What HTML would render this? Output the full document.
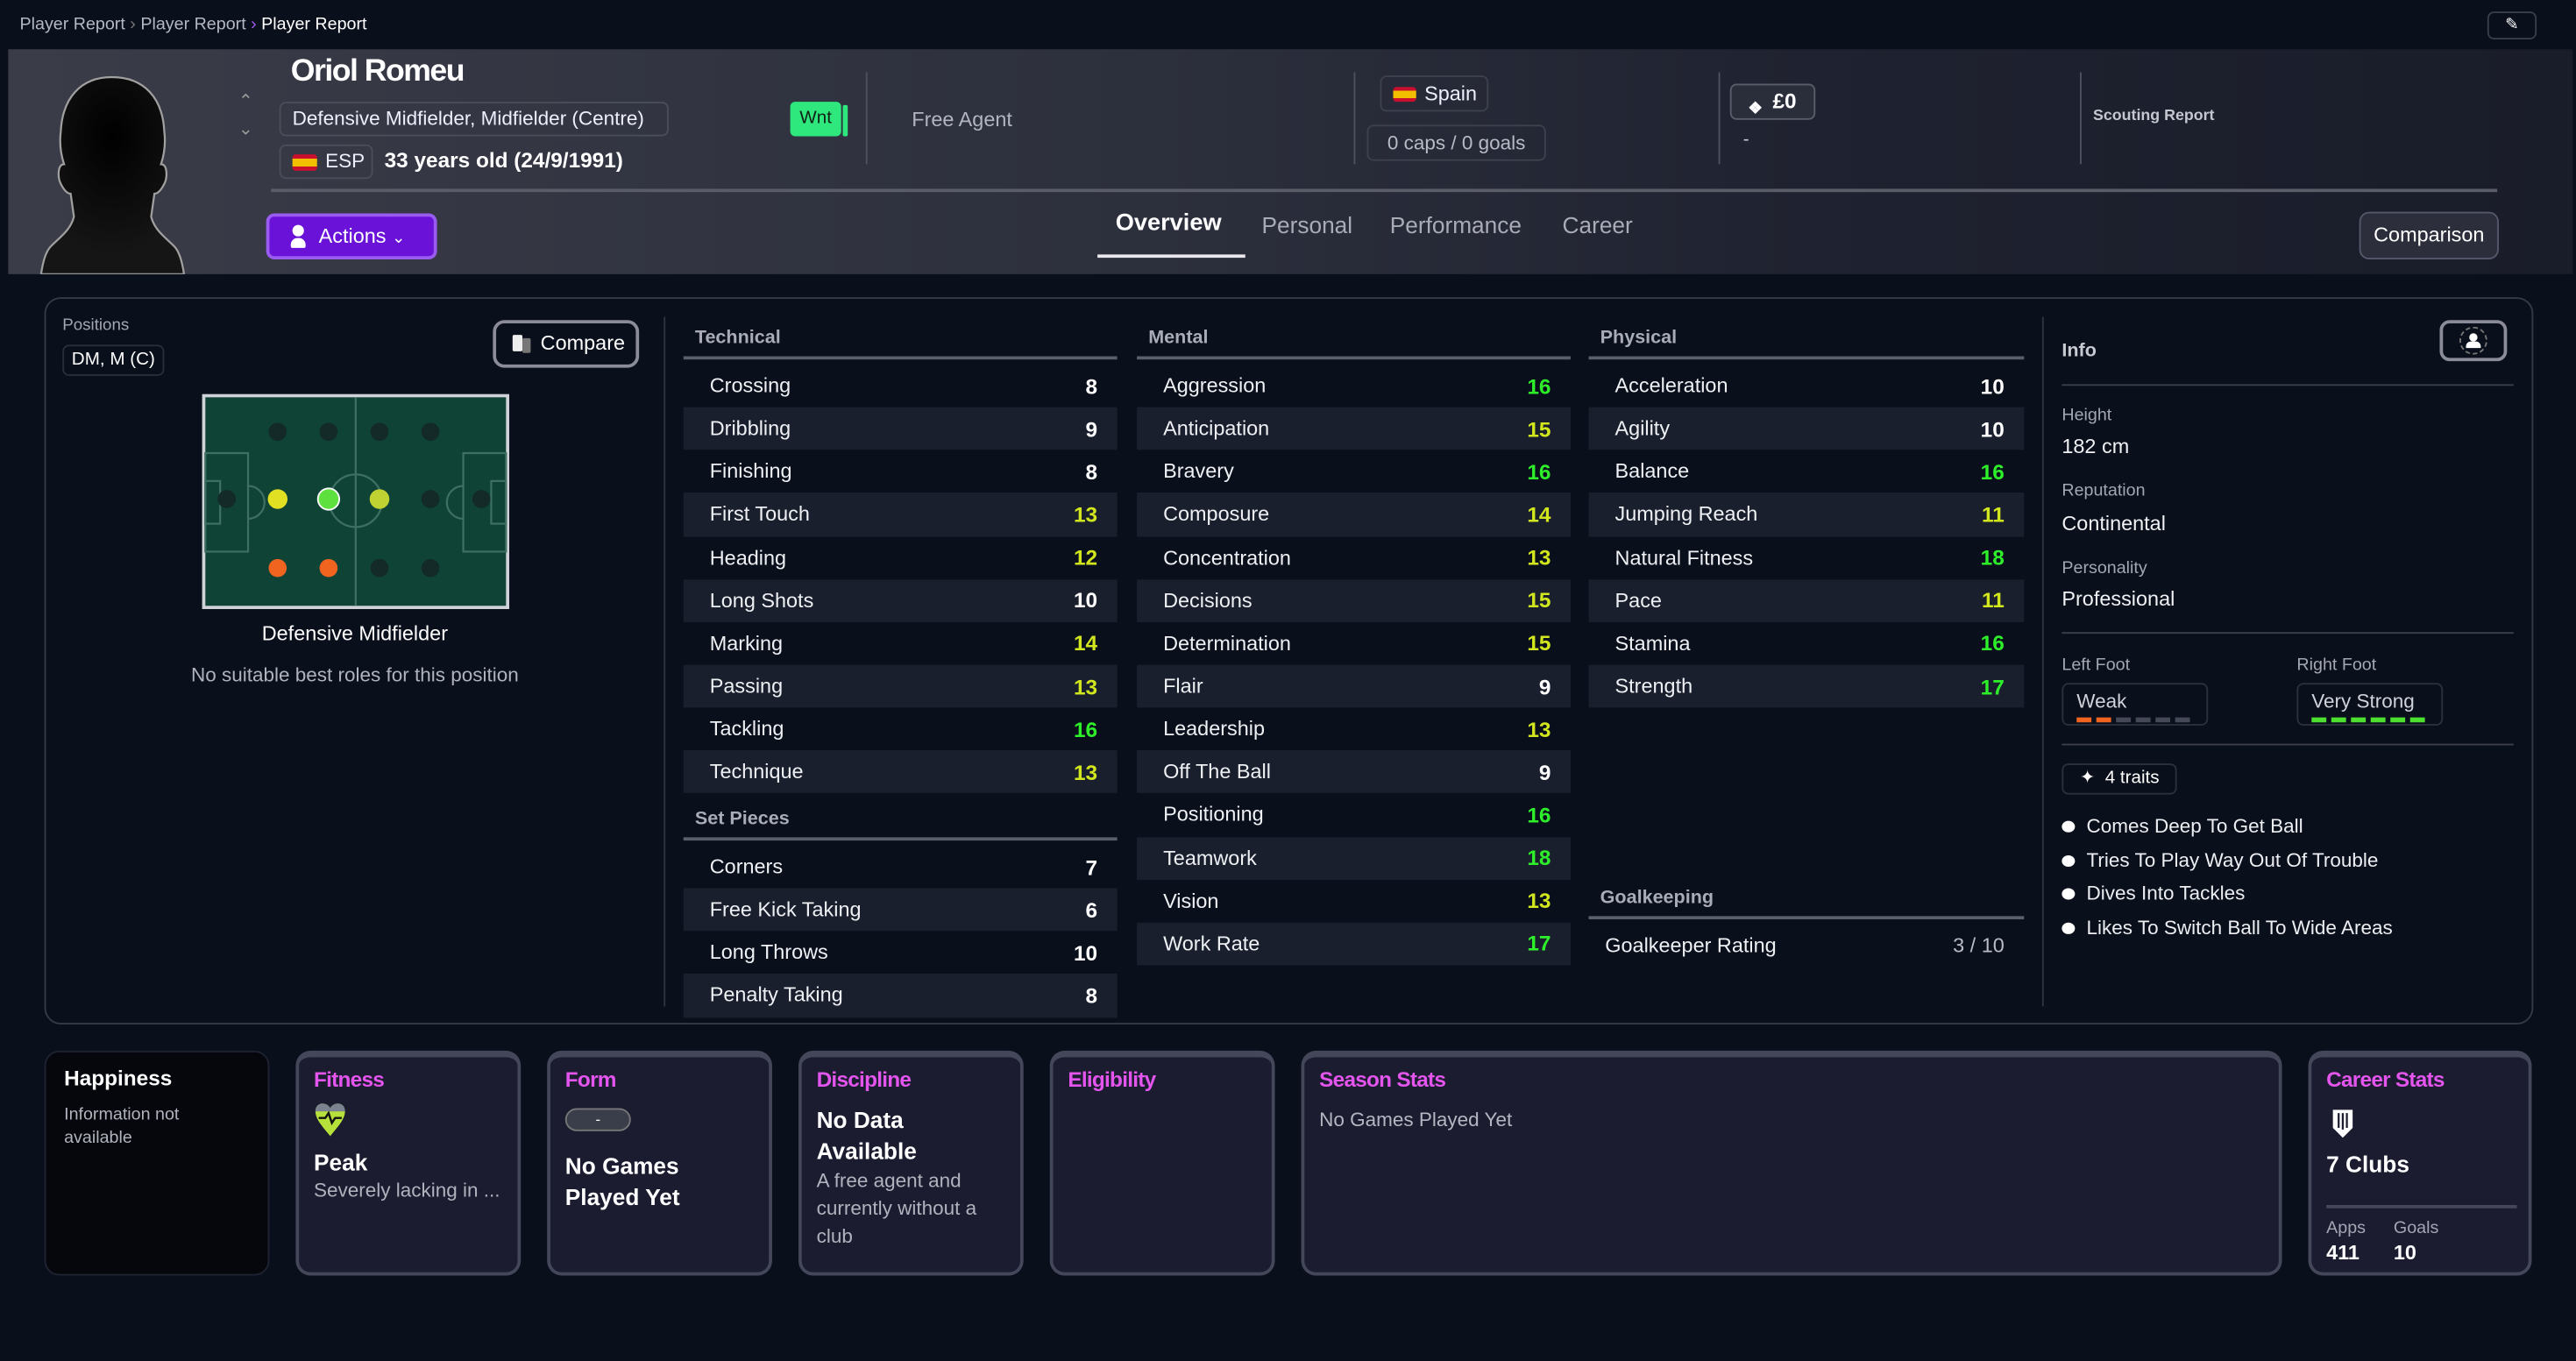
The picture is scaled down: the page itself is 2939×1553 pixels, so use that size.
<!DOCTYPE html>
<html><head><meta charset="utf-8"><style>
*{box-sizing:border-box;margin:0;padding:0}
html,body{width:2939px;height:1553px;overflow:hidden;background:#0a0f1c}
#s{position:absolute;left:0;top:0;width:1568px;height:829px;transform:scale(1.8744,1.8733);transform-origin:0 0;background:#0a0f1c;font-family:"Liberation Sans",sans-serif;color:#e8e9ee}
.a{position:absolute;white-space:nowrap}
.pill{position:absolute;border:1px solid #4a4d5a;border-radius:4px}
.col{position:absolute}
.hd{font-size:11.5px;font-weight:bold;color:#a9acb8;height:18px;padding-left:7px;line-height:14px}
.ln{height:2px;background:#5b5e6b;margin-bottom:3px}
.r{height:26.15px;display:flex;justify-content:space-between;align-items:center;padding:0 12px 0 16px;font-size:12.5px;color:#eef0f4}
.r:nth-child(even){background:#1a1f2d}
.r b{font-size:13px}
.w{color:#fff}.y{color:#d2e61e}.g{color:#2ef02a}
.card{position:absolute;top:640px;height:137px;background:#1b1c30;border:2px solid #44465a;border-top-width:4px;border-radius:9px;padding:6px 9px}
.ct{color:#e455ee;font-weight:bold;font-size:13px;letter-spacing:-.4px}
.lbl{font-size:10.5px;color:#a3a7b3}
.val{font-size:12.5px;color:#f0f1f4}
</style></head><body><div id="s">
<div class="a" style="left:12px;top:9px;font-size:10.5px;color:#b4b8c4">Player Report <span style="color:#777">&#8250;</span> Player Report <span style="color:#a05af0">&#8250;</span> <span style="color:#fff">Player Report</span></div>
<div class="pill" style="left:1514px;top:7px;width:30px;height:17px;border-color:#3a3d4a;font-size:10px;text-align:center;line-height:15px;color:#fff">&#9998;</div>
<div class="a" style="left:5px;top:30px;width:1561px;height:137px;background:linear-gradient(90deg,#3a3c48 0%,#2c2f3c 45%,#1f2230 70%,#191c29 100%)"></div>
<svg class="a" style="left:22px;top:44px" width="92" height="123" viewBox="0 0 92 123"><defs><radialGradient id="hg" cx="50%" cy="30%" r="60%"><stop offset="0" stop-color="#000"/><stop offset="1" stop-color="#151515"/></radialGradient></defs><path d="M46 3C27 3 16 16 15 36c-1 8 0 14 2 20-4 0-4 8-2 12 2 4 4 6 6 6l2 14c-2 8-8 12-14 18-3 3-5 10-6 17h87c-1-7-3-14-6-17-6-6-12-10-14-18l2-14c2 0 4-2 6-6 2-4 2-12-2-12 2-6 3-12 2-20C77 16 66 3 46 3z" fill="url(#hg)" stroke="#a0a0a0" stroke-width="1.2"/></svg>
<div class="a" style="left:145px;top:55px;font-size:11px;color:#999">&#8963;</div>
<div class="a" style="left:145px;top:72px;font-size:11px;color:#999">&#8964;</div>
<div class="a" style="left:177px;top:33px;font-size:19px;font-weight:bold;color:#fff;letter-spacing:-.8px">Oriol Romeu</div>
<div class="pill" style="left:170px;top:62px;width:237px;height:21px;font-size:12px;line-height:19px;padding-left:7px;color:#eef">Defensive Midfielder, Midfielder (Centre)</div>
<div class="pill" style="left:170px;top:88px;width:57px;height:21px;font-size:12px;line-height:19px;padding-left:27px;color:#eef"><span style="position:absolute;left:7px;top:5px;width:15px;height:10px;background:linear-gradient(#c8102e 25%,#f1bf00 25%,#f1bf00 75%,#c8102e 75%);border-radius:2px"></span>ESP</div>
<div class="a" style="left:234px;top:90px;font-size:13px;font-weight:bold;color:#fff">33 years old (24/9/1991)</div>
<div class="a" style="left:481px;top:62px;width:31px;height:21px;background:#2ee87e;border-radius:3px;font-size:11px;line-height:21px;text-align:center;color:#102015">Wnt</div>
<div class="a" style="left:513px;top:64px;width:3px;height:19px;background:#2ee87e;border-radius:1px"></div>
<div class="a" style="left:527px;top:44px;width:1px;height:56px;background:#4e515e"></div>
<div class="a" style="left:555px;top:66px;font-size:12.5px;color:#b2b5c0">Free Agent</div>
<div class="a" style="left:824px;top:44px;width:1px;height:56px;background:#4e515e"></div>
<div class="pill" style="left:840px;top:46px;width:66px;height:22px;font-size:12.5px;line-height:20px;padding-left:26px;color:#eef;border-color:#3d404d"><span style="position:absolute;left:7px;top:6px;width:14px;height:9px;background:linear-gradient(#c8102e 25%,#f1bf00 25%,#f1bf00 75%,#c8102e 75%);border-radius:2px"></span>Spain</div>
<div class="pill" style="left:832px;top:76px;width:109px;height:22px;font-size:12px;line-height:20px;text-align:center;color:#b8bbc6;border-color:#3d404d">0 caps / 0 goals</div>
<div class="a" style="left:1046px;top:44px;width:1px;height:56px;background:#4e515e"></div>
<div class="pill" style="left:1053px;top:51px;width:52px;height:22px;font-size:13px;font-weight:bold;line-height:20px;padding-left:25px;color:#fff;background:#2a2d3a;border-color:#5a5d6a"><span style="position:absolute;left:10px;top:5px;font-size:10px">&#10070;</span>£0</div>
<div class="a" style="left:1061px;top:79px;font-size:11px;color:#ccc">-</div>
<div class="a" style="left:1266px;top:44px;width:1px;height:56px;background:#4e515e"></div>
<div class="a" style="left:1274px;top:65px;font-size:9.5px;font-weight:bold;color:#c4c7d0">Scouting Report</div>
<div class="a" style="left:165px;top:115px;width:1355px;height:2px;background:#5a5c68"></div>
<div class="a" style="left:162px;top:130px;width:104px;height:28px;background:#6a12d8;border:2px solid #9a5cf0;border-radius:5px;font-size:12.5px;line-height:24px;padding-left:30px;color:#fff"><span style="position:absolute;left:14px;top:5px;width:7px;height:7px;border-radius:50%;background:#fff"></span><span style="position:absolute;left:13px;top:13px;width:9px;height:6px;border-radius:4px 4px 1px 1px;background:#fff"></span>Actions <span style="font-size:10px">&#8964;</span></div>
<div class="a" style="left:679px;top:128px;font-size:14.5px;font-weight:bold;color:#fff">Overview</div>
<div class="a" style="left:668px;top:155px;width:90px;height:2px;background:#e8e8ee"></div>
<div class="a" style="left:768px;top:129px;font-size:14px;color:#a9acb7">Personal</div>
<div class="a" style="left:846px;top:129px;font-size:14px;color:#a9acb7">Performance</div>
<div class="a" style="left:951px;top:129px;font-size:14px;color:#a9acb7">Career</div>
<div class="a" style="left:1436px;top:129px;width:85px;height:29px;background:#2c2f3b;border:1px solid #55586a;border-radius:6px;font-size:12.5px;line-height:27px;text-align:center;color:#fff">Comparison</div>

<div class="a" style="left:27px;top:181px;width:1515px;height:443px;border:1px solid #363a48;border-radius:10px"></div>
<div class="a lbl" style="left:38px;top:193px;font-size:10px">Positions</div>
<div class="pill" style="left:38px;top:210px;width:62px;height:19px;font-size:11px;line-height:17px;text-align:center;color:#fff;border-color:#2a2e3c">DM, M (C)</div>
<div class="a" style="left:300px;top:195px;width:89px;height:29px;border:2px solid #8a8d99;border-radius:7px;font-size:12.5px;line-height:25px;padding-left:27px;color:#fff"><span style="position:absolute;left:10px;top:7px;width:6px;height:10px;background:#eee;border-radius:1px"></span><span style="position:absolute;left:16px;top:9px;width:5px;height:9px;background:#777;border-radius:1px"></span>Compare</div>
<svg class="a" style="left:123px;top:240px" width="187" height="131" viewBox="0 0 187 131">
<rect x="1" y="1" width="185" height="129" fill="#0e4336" stroke="#cfd2d6" stroke-width="2"/>
<g fill="none" stroke="#3f6f62" stroke-width="1.2"><line x1="93.5" y1="2" x2="93.5" y2="129"/><circle cx="93.5" cy="65" r="16"/><rect x="2" y="36" width="26" height="60"/><rect x="2" y="53" width="9" height="26"/><rect x="159" y="36" width="26" height="60"/><rect x="176" y="53" width="9" height="26"/><path d="M28 56a10 10 0 0 1 0 20M159 56a10 10 0 0 0 0 20"/></g>
<g fill="#132a28"><circle cx="46" cy="23" r="5.5"/><circle cx="77" cy="23" r="5.5"/><circle cx="108" cy="23" r="5.5"/><circle cx="139" cy="23" r="5.5"/><circle cx="15" cy="64" r="5.5"/><circle cx="139" cy="64" r="5.5"/><circle cx="170" cy="64" r="5.5"/><circle cx="108" cy="106" r="5.5"/><circle cx="139" cy="106" r="5.5"/></g>
<circle cx="46" cy="64" r="6" fill="#e2e022"/><circle cx="77" cy="64" r="6.5" fill="#5ee03e" stroke="#fff" stroke-width="1"/><circle cx="108" cy="64" r="6" fill="#c0d232"/>
<circle cx="46" cy="106" r="5.5" fill="#f06420"/><circle cx="77" cy="106" r="5.5" fill="#f06420"/>
</svg>
<div class="a" style="left:0;width:432px;text-align:center;top:379px;font-size:12.5px;color:#fff">Defensive Midfielder</div>
<div class="a" style="left:0;width:432px;text-align:center;top:404px;font-size:12px;color:#b0b3bd">No suitable best roles for this position</div>
<div class="a" style="left:404px;top:193px;width:1px;height:420px;background:#30343f"></div>

<div class="col" style="left:416px;top:199px;width:264px">
<div class="hd">Technical</div><div class="ln"></div>
<div><div class="r"><span>Crossing</span><b class="w">8</b></div><div class="r"><span>Dribbling</span><b class="w">9</b></div><div class="r"><span>Finishing</span><b class="w">8</b></div><div class="r"><span>First Touch</span><b class="y">13</b></div><div class="r"><span>Heading</span><b class="y">12</b></div><div class="r"><span>Long Shots</span><b class="w">10</b></div><div class="r"><span>Marking</span><b class="y">14</b></div><div class="r"><span>Passing</span><b class="y">13</b></div><div class="r"><span>Tackling</span><b class="g">16</b></div><div class="r"><span>Technique</span><b class="y">13</b></div></div>
</div>
<div class="col" style="left:416px;top:492px;width:264px">
<div class="hd">Set Pieces</div><div class="ln"></div>
<div><div class="r"><span>Corners</span><b class="w">7</b></div><div class="r"><span>Free Kick Taking</span><b class="w">6</b></div><div class="r"><span>Long Throws</span><b class="w">10</b></div><div class="r"><span>Penalty Taking</span><b class="w">8</b></div></div>
</div>
<div class="col" style="left:692px;top:199px;width:264px">
<div class="hd">Mental</div><div class="ln"></div>
<div><div class="r"><span>Aggression</span><b class="g">16</b></div><div class="r"><span>Anticipation</span><b class="y">15</b></div><div class="r"><span>Bravery</span><b class="g">16</b></div><div class="r"><span>Composure</span><b class="y">14</b></div><div class="r"><span>Concentration</span><b class="y">13</b></div><div class="r"><span>Decisions</span><b class="y">15</b></div><div class="r"><span>Determination</span><b class="y">15</b></div><div class="r"><span>Flair</span><b class="w">9</b></div><div class="r"><span>Leadership</span><b class="y">13</b></div><div class="r"><span>Off The Ball</span><b class="w">9</b></div><div class="r"><span>Positioning</span><b class="g">16</b></div><div class="r"><span>Teamwork</span><b class="g">18</b></div><div class="r"><span>Vision</span><b class="y">13</b></div><div class="r"><span>Work Rate</span><b class="g">17</b></div></div>
</div>
<div class="col" style="left:967px;top:199px;width:265px">
<div class="hd">Physical</div><div class="ln"></div>
<div><div class="r"><span>Acceleration</span><b class="w">10</b></div><div class="r"><span>Agility</span><b class="w">10</b></div><div class="r"><span>Balance</span><b class="g">16</b></div><div class="r"><span>Jumping Reach</span><b class="y">11</b></div><div class="r"><span>Natural Fitness</span><b class="g">18</b></div><div class="r"><span>Pace</span><b class="y">11</b></div><div class="r"><span>Stamina</span><b class="g">16</b></div><div class="r"><span>Strength</span><b class="g">17</b></div></div>
</div>
<div class="col" style="left:967px;top:540px;width:265px">
<div class="hd">Goalkeeping</div><div class="ln"></div>
<div class="r" style="background:none;padding-left:10px"><span>Goalkeeper Rating</span><span style="color:#b8bbc6">3 / 10</span></div>
</div>
<div class="a" style="left:1243px;top:193px;width:1px;height:420px;background:#30343f"></div>

<div class="a" style="left:1255px;top:208px;font-size:11.5px;font-weight:bold;color:#c8cad2">Info</div>
<div class="a" style="left:1485px;top:195px;width:41px;height:25px;border:2px solid #8a8d99;border-radius:6px"><span style="position:absolute;left:10px;top:2px;width:17px;height:17px;border:1.5px dashed #777;border-radius:50%"></span><span style="position:absolute;left:16px;top:6px;width:5px;height:5px;background:#fff;border-radius:50%"></span><span style="position:absolute;left:14px;top:11px;width:9px;height:4px;background:#fff;border-radius:3px 3px 0 0"></span></div>
<div class="a" style="left:1255px;top:234px;width:275px;height:1px;background:#3c3f4b"></div>
<div class="a lbl" style="left:1255px;top:247px">Height</div><div class="a val" style="left:1255px;top:265px">182 cm</div>
<div class="a lbl" style="left:1255px;top:293px">Reputation</div><div class="a val" style="left:1255px;top:312px">Continental</div>
<div class="a lbl" style="left:1255px;top:340px">Personality</div><div class="a val" style="left:1255px;top:358px">Professional</div>
<div class="a" style="left:1255px;top:385px;width:275px;height:1px;background:#3c3f4b"></div>
<div class="a lbl" style="left:1255px;top:399px">Left Foot</div><div class="a lbl" style="left:1398px;top:399px">Right Foot</div>
<div class="pill" style="left:1255px;top:416px;width:89px;height:26px;border-color:#2c303d;font-size:12px;color:#d0d2da;padding:3px 0 0 8px">Weak
<div style="display:flex;gap:3px;margin-top:3px"><i style="width:9px;height:3px;background:#f06420"></i><i style="width:9px;height:3px;background:#f06420"></i><i style="width:9px;height:3px;background:#454957"></i><i style="width:9px;height:3px;background:#454957"></i><i style="width:9px;height:3px;background:#454957"></i><i style="width:9px;height:3px;background:#454957"></i></div></div>
<div class="pill" style="left:1398px;top:416px;width:89px;height:26px;border-color:#2c303d;font-size:12px;color:#d0d2da;padding:3px 0 0 8px">Very Strong
<div style="display:flex;gap:3px;margin-top:3px"><i style="width:9px;height:3px;background:#4ee030"></i><i style="width:9px;height:3px;background:#4ee030"></i><i style="width:9px;height:3px;background:#4ee030"></i><i style="width:9px;height:3px;background:#4ee030"></i><i style="width:9px;height:3px;background:#4ee030"></i><i style="width:9px;height:3px;background:#4ee030"></i></div></div>
<div class="a" style="left:1255px;top:453px;width:275px;height:1px;background:#3c3f4b"></div>
<div class="pill" style="left:1255px;top:465px;width:70px;height:19px;border-color:#2c303d;font-size:11px;line-height:17px;padding-left:10px;color:#fff">&#10022;&nbsp; 4 traits</div>
<div class="a" style="left:1255px;top:493px;font-size:12px;color:#eceef2;line-height:20.7px">
<div><span style="display:inline-block;width:8px;height:7px;border-radius:50%;background:#fff;margin-right:7px"></span>Comes Deep To Get Ball</div>
<div><span style="display:inline-block;width:8px;height:7px;border-radius:50%;background:#fff;margin-right:7px"></span>Tries To Play Way Out Of Trouble</div>
<div><span style="display:inline-block;width:8px;height:7px;border-radius:50%;background:#fff;margin-right:7px"></span>Dives Into Tackles</div>
<div><span style="display:inline-block;width:8px;height:7px;border-radius:50%;background:#fff;margin-right:7px"></span>Likes To Switch Ball To Wide Areas</div>
</div>

<div class="card" style="left:27px;width:137px;background:#05070d;border:1px solid #1f2331;padding:8px 11px">
<div style="font-size:13px;font-weight:bold;color:#fff">Happiness</div>
<div style="font-size:10.5px;color:#b0b3bd;margin-top:8px;line-height:14px">Information not<br>available</div></div>
<div class="card" style="left:180px;width:137px"><div class="ct">Fitness</div>
<svg width="20" height="22" viewBox="0 0 20 22" style="margin-top:6px"><path d="M10 4C8 0 1 0 1 6c0 5 5 10 9 15 4-5 9-10 9-15 0-6-7-6-9-2z" fill="#b6e03a"/><path d="M1 6c0-6 7-6 9-2 2-4 9-4 9 2z" fill="#7b8391"/><path d="M3 10h4l2-3 2 6 2-3h4" fill="none" stroke="#111" stroke-width="1.3"/></svg>
<div style="font-size:14px;font-weight:bold;color:#fff;margin-top:2px">Peak</div>
<div style="font-size:12px;color:#b0b3bd;margin-top:2px">Severely lacking in ...</div></div>
<div class="card" style="left:333px;width:137px"><div class="ct">Form</div>
<div style="width:40px;height:14px;border-radius:7px;background:#3a3d4a;border:1px solid #777;margin-top:10px;text-align:center;font-size:9px;line-height:12px;color:#fff">-</div>
<div style="font-size:14px;font-weight:bold;color:#fff;margin-top:12px;line-height:19px">No Games<br>Played Yet</div></div>
<div class="card" style="left:486px;width:137px"><div class="ct">Discipline</div>
<div style="font-size:14px;font-weight:bold;color:#fff;margin-top:8px;line-height:19px">No Data<br>Available</div>
<div style="font-size:12px;color:#b0b3bd;line-height:17px">A free agent and<br>currently without a<br>club</div></div>
<div class="card" style="left:639px;width:137px"><div class="ct">Eligibility</div></div>
<div class="card" style="left:792px;width:597px"><div class="ct">Season Stats</div>
<div style="font-size:12px;color:#b4b7c1;margin-top:10px">No Games Played Yet</div></div>
<div class="card" style="left:1405px;width:136px"><div class="ct">Career Stats</div>
<svg width="14" height="19" viewBox="0 0 14 19" style="margin-top:10px;margin-left:3px"><path d="M1 1h12v11l-6 6-6-6z" fill="#fff"/><path d="M4.5 3v9M7 3v10M9.5 3v9" stroke="#1b1c30" stroke-width="1.2"/></svg>
<div style="font-size:14px;font-weight:bold;color:#fff;margin-top:2px">7 Clubs</div>
<div style="height:2px;background:#44465a;margin-top:17px;width:116px"></div>
<div style="display:flex;gap:17px;margin-top:6px"><div><div style="font-size:10.5px;color:#a3a7b3">Apps</div><div style="font-size:12.5px;font-weight:bold;color:#fff;margin-top:2px">411</div></div><div><div style="font-size:10.5px;color:#a3a7b3">Goals</div><div style="font-size:12.5px;font-weight:bold;color:#fff;margin-top:2px">10</div></div></div></div>
</div></body></html>
